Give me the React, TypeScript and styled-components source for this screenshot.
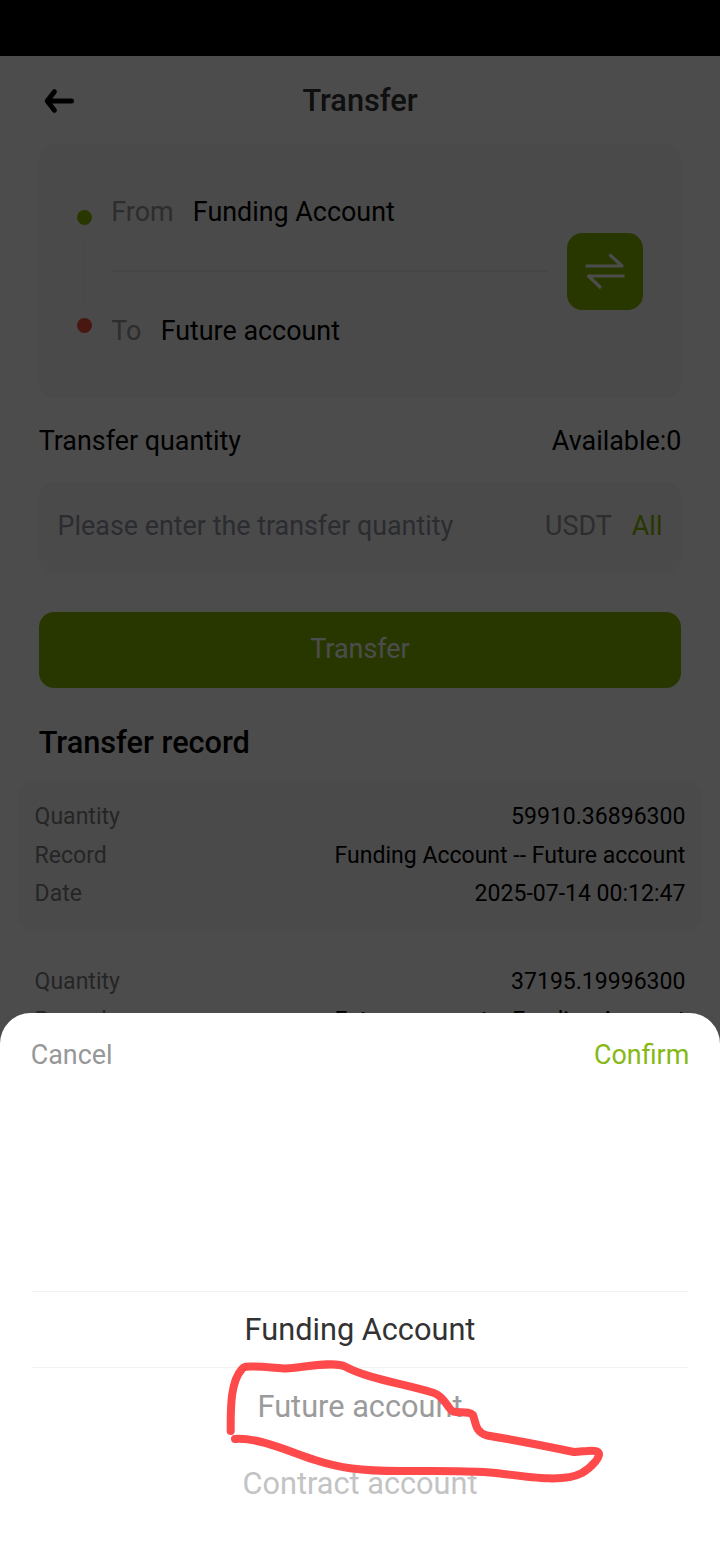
import React from "react";
import styled, { createGlobalStyle } from "styled-components";

const GlobalStyle = createGlobalStyle`
  * { box-sizing: border-box; }
  body {
    margin: 0;
    background: #fff;
    font-family: Roboto, "Liberation Sans", sans-serif;
    font-size: 26.88px;
    color: #000;
  }
`;

const Screen = styled.div`
  position: relative;
  width: 720px;
  height: 1560px;
  overflow: hidden;
  background: #fff;
`;

const StatusBar = styled.div`
  height: 56px;
  background: #000;
`;

const Header = styled.header`
  display: grid;
  grid-template-columns: 120px 1fr 120px;
  align-items: center;
  height: 88px;
  padding-top: 2px;
`;

const BackButton = styled.button`
  display: flex;
  padding: 0 0 0 44px;
  border: 0;
  background: none;
`;

const Title = styled.h1`
  margin: 0;
  font-size: 30.72px;
  font-weight: 500;
  line-height: 36px;
  text-align: center;
  color: #323233;
`;

const Body = styled.main`
  display: flex;
  flex-direction: column;
  padding: 0 38.7px;
`;

const RouteCard = styled.section`
  display: flex;
  align-items: center;
  height: 254px;
  padding: 0 38.1px;
  border-radius: 15.36px;
  background: #f8f8f8;
`;

const Track = styled.div`
  display: flex;
  flex-direction: column;
  align-items: center;
  justify-content: space-between;
  width: 15.4px;
  height: 123.4px;
  margin: 1px 19.2px 0 0;
`;

const Dot = styled.span<{ $color: string }>`
  width: 15.4px;
  height: 15.4px;
  border-radius: 50%;
  background: ${(p) => p.$color};
`;

const TrackLine = styled.span`
  width: 2px;
  height: 62px;
  background: #f0f0f0;
`;

const Accounts = styled.div`
  flex: 1;
  display: flex;
  flex-direction: column;
`;

const AccountRow = styled.div`
  display: flex;
  align-items: center;
  gap: 19.2px;
  height: 117px;
`;

const Muted = styled.span`
  color: #969799;
`;

const Divider = styled.div`
  height: 2px;
  background: #ebebeb;
`;

const SwapButton = styled.button`
  display: flex;
  align-items: center;
  justify-content: center;
  width: 76.5px;
  height: 77px;
  margin: 1px 0 0 19.2px;
  padding: 0 0 1.4px;
  border: 0;
  border-radius: 15.36px;
  background: #86b800;
`;

const QuantityHead = styled.div`
  display: flex;
  align-items: center;
  justify-content: space-between;
  height: 84px;
  padding-top: 2px;
`;

const QuantityField = styled.div`
  display: flex;
  align-items: center;
  height: 91px;
  padding: 0 18.9px 3px;
  border-radius: 15.36px;
  background: #f8f8f8;
`;

const Placeholder = styled.span`
  flex: 1;
  color: #9194a3;
`;

const AllButton = styled.button`
  margin-left: 20px;
  padding: 0;
  border: 0;
  background: none;
  font: inherit;
  color: #86b800;
`;

const SubmitButton = styled.button`
  height: 76.4px;
  margin-top: 38.6px;
  padding: 0 0 2px;
  border: 0;
  border-radius: 15.36px;
  background: #86b800;
  font: inherit;
  color: #fff;
`;

const SectionTitle = styled.h2`
  margin: 37px 0 20.2px;
  font-size: 30.72px;
  font-weight: 500;
  line-height: 36px;
`;

const Records = styled.div`
  display: flex;
  flex-direction: column;
  gap: 15px;
  margin: 0 -20.3px;
`;

const RecordCard = styled.article<{ $shaded: boolean }>`
  padding: 17px 16.2px 17.8px;
  border-radius: 15.36px;
  background: ${(p) => (p.$shaded ? "#f8f8f8" : "transparent")};
`;

const RecordRow = styled.div`
  display: flex;
  justify-content: space-between;
  font-size: 23.04px;
  line-height: 38.4px;
`;

const RecordLabel = styled.span`
  color: #7d7e80;
`;

const Overlay = styled.div`
  position: absolute;
  inset: 0;
  background: rgba(0, 0, 0, 0.7);
`;

const Sheet = styled.section`
  position: absolute;
  left: 0;
  right: 0;
  bottom: 0;
  height: 546.7px;
  border-radius: 30.72px 30.72px 0 0;
  background: #fff;
`;

const SheetToolbar = styled.div`
  display: flex;
  align-items: center;
  justify-content: space-between;
  height: 84.7px;
  padding: 0 30.72px 2px;
`;

const ToolbarButton = styled.button<{ $color: string }>`
  padding: 0;
  border: 0;
  background: none;
  font: inherit;
  color: ${(p) => p.$color};
`;

const Picker = styled.ul`
  height: 462px;
  margin: 0;
  padding: 193px 30.72px 0;
  list-style: none;
`;

const Option = styled.li<{ $color: string; $selected?: boolean }>`
  display: flex;
  align-items: center;
  justify-content: center;
  height: 77px;
  padding-top: 0.2px;
  font-size: 30.72px;
  color: ${(p) => p.$color};
  box-shadow: ${(p) => (p.$selected ? "inset 0 1px #f3f3f4, inset 0 -1px #f3f3f4" : "none")};
`;

const Scribble = styled.svg`
  position: absolute;
  left: 220px;
  top: 1350px;
`;

const records: { quantity: string; route: string; date?: string }[] = [
  { quantity: "59910.36896300", route: "Funding Account -- Future account", date: "2025-07-14 00:12:47" },
  { quantity: "37195.19996300", route: "Future account -- Funding Account" },
];

const BackIcon = () => (
  <svg width="31" height="26" viewBox="0 0 31 26" fill="none" stroke="#000" strokeWidth="5" strokeLinecap="round" strokeLinejoin="round">
    <path d="M3.5 13H27.5M10.4 3.7L3.2 13l7.2 9.3" />
  </svg>
);

const SwapIcon = () => (
  <svg width="40" height="38" viewBox="0 0 40 38" fill="none" stroke="#fff" strokeWidth="3.2" strokeLinejoin="round">
    <path d="M.5 14H37L24.5 2.5M39.5 24H3.5l12.5 12" />
  </svg>
);

export default function App() {
  return (
    <Screen>
      <GlobalStyle />
      <StatusBar />
      <Header>
        <BackButton aria-label="Back">
          <BackIcon />
        </BackButton>
        <Title>Transfer</Title>
      </Header>
      <Body>
        <RouteCard>
          <Track>
            <Dot $color="#86b800" />
            <TrackLine />
            <Dot $color="#ee4d38" />
          </Track>
          <Accounts>
            <AccountRow>
              <Muted>From</Muted>
              <span>Funding Account</span>
            </AccountRow>
            <Divider />
            <AccountRow>
              <Muted>To</Muted>
              <span>Future account</span>
            </AccountRow>
          </Accounts>
          <SwapButton aria-label="Swap accounts">
            <SwapIcon />
          </SwapButton>
        </RouteCard>
        <QuantityHead>
          <span>Transfer quantity</span>
          <span>Available:0</span>
        </QuantityHead>
        <QuantityField>
          <Placeholder>Please enter the transfer quantity</Placeholder>
          <Muted>USDT</Muted>
          <AllButton>All</AllButton>
        </QuantityField>
        <SubmitButton>Transfer</SubmitButton>
        <SectionTitle>Transfer record</SectionTitle>
        <Records>
          {records.map((r, i) => (
            <RecordCard key={r.quantity} $shaded={i % 2 === 0}>
              <RecordRow>
                <RecordLabel>Quantity</RecordLabel>
                <span>{r.quantity}</span>
              </RecordRow>
              <RecordRow>
                <RecordLabel>Record</RecordLabel>
                <span>{r.route}</span>
              </RecordRow>
              {r.date && (
                <RecordRow>
                  <RecordLabel>Date</RecordLabel>
                  <span>{r.date}</span>
                </RecordRow>
              )}
            </RecordCard>
          ))}
        </Records>
      </Body>
      <Overlay />
      <Sheet>
        <SheetToolbar>
          <ToolbarButton $color="#969799">Cancel</ToolbarButton>
          <ToolbarButton $color="#86b817">Confirm</ToolbarButton>
        </SheetToolbar>
        <Picker>
          <Option $color="#323233" $selected>Funding Account</Option>
          <Option $color="#9b9b9c">Future account</Option>
          <Option $color="#c3c3c4">Contract account</Option>
        </Picker>
      </Sheet>
      <Scribble width="390" height="140" viewBox="220 1350 390 140" fill="none" stroke="#fe4a4a" strokeWidth="8" strokeLinecap="round" strokeLinejoin="round">
        <path d="M230.7 1431C230.500 1405 231 1381 242 1369C244 1366 248 1366.500 253 1366.500C265 1366.500 276 1368 286 1368.500C305 1367 335 1361 345 1366.500C368 1379 405 1384 434 1393C444 1396 448 1409 453 1411.500C460 1413 470 1411 473 1415C476 1423 475 1432 487 1435.500C515 1440 550 1447 574 1452C582 1452 594 1449 598 1452C602 1456 592 1467 582 1473C565 1482 535 1478 500 1473.500C480 1470 440 1471 400 1471C360 1471 340 1468 315 1460C290 1452 258 1437 235 1439" />
      </Scribble>
    </Screen>
  );
}
